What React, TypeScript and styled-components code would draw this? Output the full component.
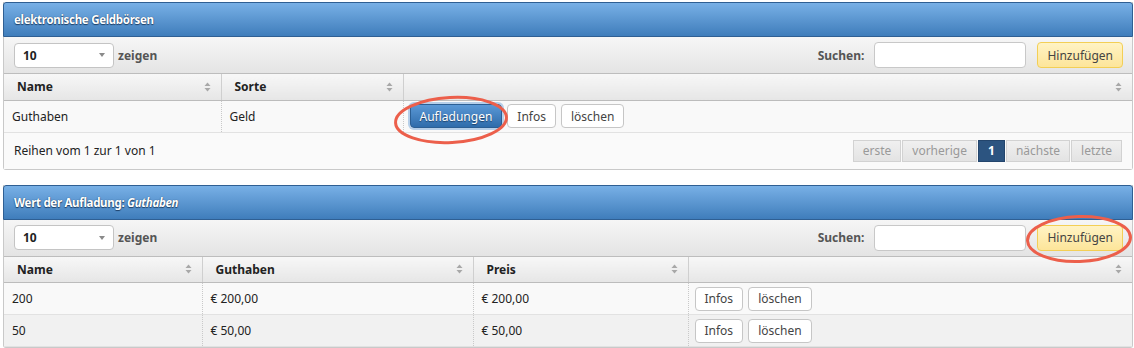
import React from "react";
import styled, { createGlobalStyle } from "styled-components";

const Global = createGlobalStyle`
  html, body { margin: 0; padding: 0; background: #fff; }
  body { font-family: "Noto Sans", "DejaVu Sans", sans-serif; font-size: 12px; color: #222; }
  * { box-sizing: border-box; }
`;

const Page = styled.div`
  padding: 2px 1px 0 3px;
  display: flex;
  flex-direction: column;
  gap: 15px;
`;

const Panel = styled.section`
  position: relative;
  border: 1px solid #c9c9c9;
  border-top: none;
  border-radius: 0 0 3px 3px;
  background: #fff;
`;

const Header = styled.div`
  height: 35px;
  display: flex;
  align-items: center;
  padding-left: 10px;
  margin: 0 -1px;
  background: linear-gradient(#78b0e6, #3f7dbb);
  border: 1px solid #2f5f93;
  border-radius: 3px 3px 0 0;
  color: #fff;
  font-weight: bold;
  font-size: 11.5px;
  letter-spacing: -0.3px;
  text-shadow: 0 1px 1px #1d3f66, 0 0 1px #1d3f66;
  em { font-style: italic; }
`;

const Toolbar = styled.div`
  height: 37px;
  display: flex;
  align-items: center;
  padding: 0 9px 0 10px;
  background: linear-gradient(#f6f6f6, #e4e4e4);
  border-bottom: 1px solid #bdbdbd;
`;

const SelectBox = styled.div`
  width: 100px;
  height: 25px;
  border: 1px solid #c4c4c4;
  border-radius: 4px;
  background: #fff;
  display: flex;
  align-items: center;
  justify-content: space-between;
  padding: 0 8px 0 8px;
  font-weight: bold;
  font-size: 12px;
`;

const Caret = styled.span`
  width: 0;
  height: 0;
  border-left: 3px solid transparent;
  border-right: 3px solid transparent;
  border-top: 4px solid #8a8a8a;
`;

const Label = styled.span`
  font-weight: bold;
  color: #555;
  margin-left: 4px;
`;

const Spacer = styled.div`
  flex: 1;
`;

const SearchInput = styled.div`
  width: 152px;
  height: 26px;
  margin: 0 11px 0 10px;
  border: 1px solid #c8c8c8;
  border-radius: 4px;
  background: #fff;
`;

const AddButton = styled.button`
  height: 26px;
  padding: 0 9px;
  font: inherit;
  color: #444;
  background: linear-gradient(#fff3c4, #fde59a);
  border: 1px solid #f3cf55;
  border-radius: 4px;
`;

const Table = styled.table`
  width: 100%;
  border-collapse: collapse;
  table-layout: fixed;
`;

const Th = styled.th<{ $w?: number }>`
  ${(p) => (p.$w ? `width: ${p.$w}px;` : "")}
  height: 26px;
  padding: 0 10px 0 13px;
  text-align: left;
  font-weight: bold;
  background: linear-gradient(#f7f7f7, #e6e6e6);
  border-right: 1px solid #cfcfcf;
  border-bottom: 1px solid #bcbcbc;
  &:last-child { border-right: none; }
`;

const ThInner = styled.div`
  display: flex;
  align-items: center;
  justify-content: space-between;
`;

const Td = styled.td`
  height: 32px;
  padding: 0 8px;
  border-right: 1px dotted #c9c9c9;
  &:last-child { border-right: none; padding-left: 6px; }
`;

const Tr = styled.tr<{ $alt?: boolean }>`
  background: ${(p) => (p.$alt ? "#f1f1f1" : "#f9f9f9")};
  border-bottom: 1px solid #e2e2e2;
`;

const ButtonRow = styled.div`
  display: flex;
  gap: 5px;
  align-items: center;
`;

const Btn = styled.button<{ $primary?: boolean }>`
  height: 24px;
  padding: 0 9px;
  font: inherit;
  font-size: 12px;
  border-radius: 4px;
  color: ${(p) => (p.$primary ? "#fff" : "#444")};
  background: ${(p) => (p.$primary ? "linear-gradient(#5a98d6, #2f6cab)" : "#fff")};
  border: 1px solid ${(p) => (p.$primary ? "#2c5f94" : "#c6c6c6")};
  text-shadow: ${(p) => (p.$primary ? "0 1px 1px #1d3f66" : "none")};
  box-shadow: ${(p) => (p.$primary ? "0 0 0 2px #b6cfe9" : "none")};
`;

const Footer = styled.div`
  height: 36px;
  display: flex;
  align-items: center;
  padding: 0 10px 0 10px;
  background: #fafafa;
`;

const Pager = styled.div`
  display: flex;
  gap: 1px;
`;

const PageBtn = styled.span<{ $active?: boolean }>`
  height: 22px;
  padding: 0 9px;
  display: flex;
  align-items: center;
  color: ${(p) => (p.$active ? "#fff" : "#999")};
  font-weight: ${(p) => (p.$active ? "bold" : "normal")};
  background: ${(p) => (p.$active ? "#2c5480" : "linear-gradient(#f0f0f0, #e3e3e3)")};
  border: 1px solid ${(p) => (p.$active ? "#23456c" : "#d2d2d2")};
`;

const Ring = styled.svg`
  position: absolute;
  pointer-events: none;
  overflow: visible;
`;

const SortIcon = () => (
  <svg width="7" height="10" viewBox="0 0 7 10">
    <path d="M3.5 0.5 L6.5 4 H0.5 Z" fill="#a8a8a8" />
    <path d="M3.5 9.5 L6.5 6 H0.5 Z" fill="#a8a8a8" />
  </svg>
);

const HeadCell = ({ w, children }: { w?: number; children?: React.ReactNode }) => (
  <Th $w={w}>
    <ThInner>
      <span>{children}</span>
      <SortIcon />
    </ThInner>
  </Th>
);

const Tools = () => (
  <Toolbar>
    <SelectBox>
      10
      <Caret />
    </SelectBox>
    <Label>zeigen</Label>
    <Spacer />
    <Label>Suchen:</Label>
    <SearchInput />
    <AddButton>Hinzufügen</AddButton>
  </Toolbar>
);

const Ellipse = ({ left, top, w, h, rot }: { left: number; top: number; w: number; h: number; rot: number }) => (
  <Ring width={w} height={h} style={{ left, top }}>
    <ellipse
      cx={w / 2}
      cy={h / 2}
      rx={w / 2 - 1.5}
      ry={h / 2 - 1.5}
      fill="none"
      stroke="#ec5f4b"
      strokeWidth="3"
      transform={`rotate(${rot} ${w / 2} ${h / 2})`}
    />
  </Ring>
);

export default function App() {
  return (
    <>
      <Global />
      <Page>
        <Panel>
          <Header>elektronische Geldbörsen</Header>
          <Tools />
          <Table>
            <thead>
              <tr>
                <HeadCell w={217}>Name</HeadCell>
                <HeadCell w={182}>Sorte</HeadCell>
                <HeadCell />
              </tr>
            </thead>
            <tbody>
              <Tr>
                <Td>Guthaben</Td>
                <Td>Geld</Td>
                <Td>
                  <ButtonRow>
                    <Btn $primary>Aufladungen</Btn>
                    <Btn>Infos</Btn>
                    <Btn>löschen</Btn>
                  </ButtonRow>
                </Td>
              </Tr>
            </tbody>
          </Table>
          <Footer>
            Reihen vom 1 zur 1 von 1
            <Spacer />
            <Pager>
              <PageBtn>erste</PageBtn>
              <PageBtn>vorherige</PageBtn>
              <PageBtn $active>1</PageBtn>
              <PageBtn>nächste</PageBtn>
              <PageBtn>letzte</PageBtn>
            </Pager>
          </Footer>
          <Ellipse left={390} top={94} w={114} h={48} rot={-3} />
        </Panel>
        <Panel>
          <Header>
            Wert der Aufladung:&nbsp;<em>Guthaben</em>
          </Header>
          <Tools />
          <Table>
            <thead>
              <tr>
                <HeadCell w={198}>Name</HeadCell>
                <HeadCell w={271}>Guthaben</HeadCell>
                <HeadCell w={215}>Preis</HeadCell>
                <HeadCell />
              </tr>
            </thead>
            <tbody>
              <Tr>
                <Td>200</Td>
                <Td>€ 200,00</Td>
                <Td>€ 200,00</Td>
                <Td>
                  <ButtonRow>
                    <Btn>Infos</Btn>
                    <Btn>löschen</Btn>
                  </ButtonRow>
                </Td>
              </Tr>
              <Tr $alt>
                <Td>50</Td>
                <Td>€ 50,00</Td>
                <Td>€ 50,00</Td>
                <Td>
                  <ButtonRow>
                    <Btn>Infos</Btn>
                    <Btn>löschen</Btn>
                  </ButtonRow>
                </Td>
              </Tr>
            </tbody>
          </Table>
          <Ellipse left={1022} top={30} w={106} h={48} rot={-2} />
        </Panel>
      </Page>
    </>
  );
}
